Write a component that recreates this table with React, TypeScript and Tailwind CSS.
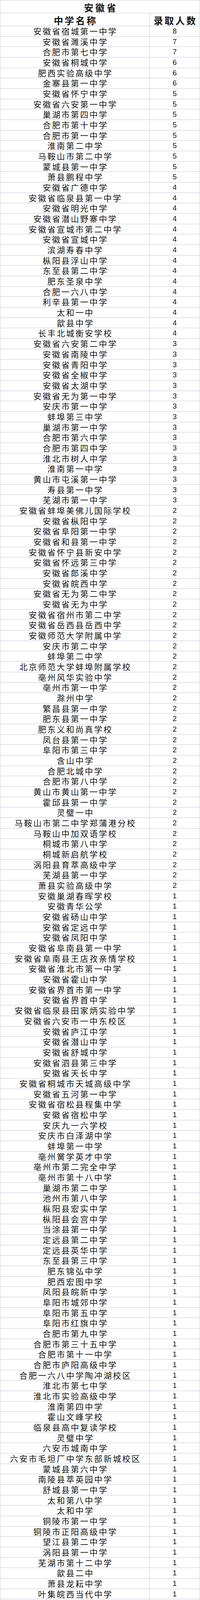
import React from "react";

const rows: [string, number][] = [
  ["安徽省宿城第一中学", 8],
  ["安徽省濉溪中学", 7],
  ["合肥市第七中学", 7],
  ["安徽省桐城中学", 6],
  ["肥西实验高级中学", 6],
  ["金寨县第一中学", 6],
  ["安徽省怀宁中学", 5],
  ["安徽省六安第一中学", 5],
  ["巢湖市第四中学", 5],
  ["合肥市第十中学", 5],
  ["合肥市第一中学", 5],
  ["淮南第二中学", 5],
  ["马鞍山市第二中学", 5],
  ["蒙城县第一中学", 5],
  ["萧县鹏程中学", 5],
  ["安徽省广德中学", 4],
  ["安徽省临泉县第一中学", 4],
  ["安徽省明光中学", 4],
  ["安徽省潜山野寨中学", 4],
  ["安徽省宣城市第二中学", 4],
  ["安徽省宣城中学", 4],
  ["滨湖寿春中学", 4],
  ["枞阳县浮山中学", 4],
  ["东至县第二中学", 4],
  ["肥东圣泉中学", 4],
  ["合肥一六八中学", 4],
  ["利辛县第一中学", 4],
  ["太和一中", 4],
  ["歙县中学", 4],
  ["长丰北城衡安学校", 4],
  ["安徽省六安第二中学", 3],
  ["安徽省南陵中学", 3],
  ["安徽省青阳中学", 3],
  ["安徽省全椒中学", 3],
  ["安徽省太湖中学", 3],
  ["安徽省无为第一中学", 3],
  ["安庆市第一中学", 3],
  ["蚌埠第三中学", 3],
  ["巢湖市第一中学", 3],
  ["合肥市第六中学", 3],
  ["合肥市第四中学", 3],
  ["淮北市树人中学", 3],
  ["淮南第一中学", 3],
  ["黄山市屯溪第一中学", 3],
  ["寿县第一中学", 3],
  ["芜湖市第一中学", 3],
  ["安徽省蚌埠美佛儿国际学校", 2],
  ["安徽省枞阳中学", 2],
  ["安徽省阜阳第一中学", 2],
  ["安徽省和县第一中学", 2],
  ["安徽省怀宁县新安中学", 2],
  ["安徽省怀远第三中学", 2],
  ["安徽省郎溪中学", 2],
  ["安徽省皖西中学", 2],
  ["安徽省无为第二中学", 2],
  ["安徽省无为中学", 2],
  ["安徽省宿州市第二中学", 2],
  ["安徽省岳西县岳西中学", 2],
  ["安徽师范大学附属中学", 2],
  ["安庆市第二中学", 2],
  ["蚌埠第二中学", 2],
  ["北京师范大学蚌埠附属学校", 2],
  ["亳州风华实验中学", 2],
  ["亳州市第一中学", 2],
  ["滁州中学", 2],
  ["繁昌县第一中学", 2],
  ["肥东县第一中学", 2],
  ["肥东义和尚真学校", 2],
  ["凤台县第一中学", 2],
  ["阜阳市第三中学", 2],
  ["含山中学", 2],
  ["合肥北城中学", 2],
  ["合肥市第八中学", 2],
  ["黄山市黄山第一中学", 2],
  ["霍邱县第一中学", 2],
  ["灵璧一中", 2],
  ["马鞍山市第二中学郑蒲港分校", 2],
  ["马鞍山中加双语学校", 2],
  ["桐城市第八中学", 2],
  ["桐城新启航学校", 2],
  ["涡阳县育萃高级中学", 2],
  ["芜湖县第一中学", 2],
  ["萧县实验高级中学", 2],
  ["安徽巢湖春晖学校", 1],
  ["安徽青华公学", 1],
  ["安徽省砀山中学", 1],
  ["安徽省定远中学", 1],
  ["安徽省凤阳中学", 1],
  ["安徽省阜南县第一中学", 1],
  ["安徽省阜南县王店孜亲情学校", 1],
  ["安徽省淮北市第一中学", 1],
  ["安徽省霍山中学", 1],
  ["安徽省界首市第一中学", 1],
  ["安徽省界首中学", 1],
  ["安徽省临泉县田家炳实验中学", 1],
  ["安徽省六安市一中东校区", 1],
  ["安徽省庐江中学", 1],
  ["安徽省潜山中学", 1],
  ["安徽省舒城中学", 1],
  ["安徽省泗县第三中学", 1],
  ["安徽省天长中学", 1],
  ["安徽省桐城市天城高级中学", 1],
  ["安徽省五河第一中学", 1],
  ["安徽省宿松县程集中学", 1],
  ["安徽省宿松中学", 1],
  ["安庆九一六学校", 1],
  ["安庆市白泽湖中学", 1],
  ["蚌埠第一中学", 1],
  ["亳州黉学英才中学", 1],
  ["亳州市第二完全中学", 1],
  ["亳州市第十八中学", 1],
  ["巢湖市第二中学", 1],
  ["池州市第八中学", 1],
  ["枞阳县宏实中学", 1],
  ["枞阳县会宫中学", 1],
  ["当涂县第一中学", 1],
  ["定远县第二中学", 1],
  ["定远县英华中学", 1],
  ["东至县第三中学", 1],
  ["肥东锦弘中学", 1],
  ["肥西宏图中学", 1],
  ["凤阳县皖新中学", 1],
  ["阜阳市城郊中学", 1],
  ["阜阳市第五中学", 1],
  ["阜阳市红旗中学", 1],
  ["合肥市第九中学", 1],
  ["合肥市第三十五中学", 1],
  ["合肥市第十一中学", 1],
  ["合肥市庐阳高级中学", 1],
  ["合肥一六八中学陶冲湖校区", 1],
  ["淮北市第七中学", 1],
  ["淮北市实验高级中学", 1],
  ["淮南第四中学", 1],
  ["霍山文峰学校", 1],
  ["临泉县高中复读学校", 1],
  ["灵璧中学", 1],
  ["六安市城南中学", 1],
  ["六安市毛坦厂中学东部新城校区", 1],
  ["蒙城县第六中学", 1],
  ["南陵县萃英园中学", 1],
  ["舒城县第一中学", 1],
  ["太和第八中学", 1],
  ["太和中学", 1],
  ["铜陵市第一中学", 1],
  ["铜陵市正阳高级中学", 1],
  ["望江县第二中学", 1],
  ["涡阳县第一中学", 1],
  ["芜湖市第十二中学", 1],
  ["歙县二中", 1],
  ["萧县龙耘中学", 1],
  ["叶集皖西当代中学", 1],
];

export default function App() {
  return (
    <div
      className="w-[513px] bg-white text-[#151515] border-t border-l border-r border-[#c8cad9]"
      style={{ fontFamily: '"Noto Sans CJK SC", "Noto Sans", sans-serif' }}
    >
      <div className="h-[33px] border-b border-[#c8cad9] pt-[4px] pl-[5px] text-center text-[24px] leading-[28px] font-bold tracking-[5px]">
        安徽省
      </div>
      <div className="grid h-[33px] grid-cols-[383px_1fr] border-b border-[#c8cad9] text-[24px] leading-[28px] font-bold tracking-[4px]">
        <div className="border-r border-[#c8cad9] pt-[4px] pl-[4px] text-center">中学名称</div>
        <div className="pt-[4px] pl-[4px] text-center">录取人数</div>
      </div>
      {rows.map(([name, n], i) => (
        <div
          key={i}
          className="grid h-[26.68px] grid-cols-[383px_1fr] border-b border-[#c8cad9]"
        >
          <div className="border-r border-[#c8cad9] pl-[3px] text-center text-[21px] leading-[25.7px] tracking-[3px] whitespace-nowrap">
            {name}
          </div>
          <div
            className="text-center text-[19px] leading-[25.7px]"
            style={{ fontFamily: '"Liberation Sans", Arial, sans-serif' }}
          >
            {n}
          </div>
        </div>
      ))}
    </div>
  );
}
